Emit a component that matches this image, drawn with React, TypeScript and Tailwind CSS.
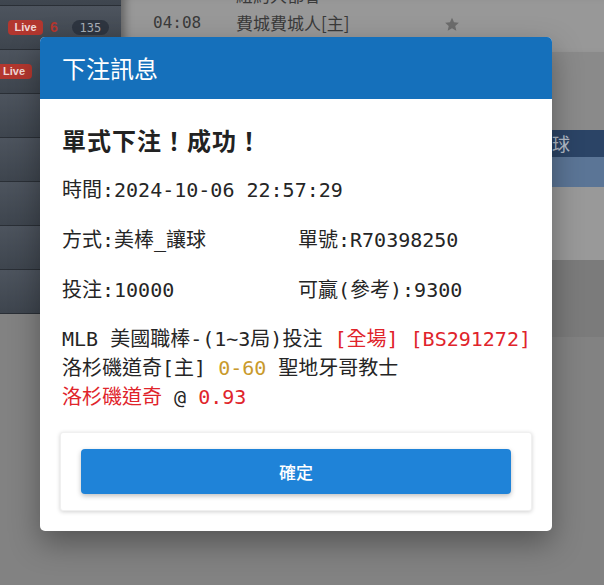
const mono = "font-['DejaVu_Sans_Mono','Noto_Sans_CJK_TC',monospace]";

function LiveBadge({ className = "" }: { className?: string }) {
  return (
    <span
      className={`inline-flex h-[15px] items-center rounded-[4px] bg-[#b3372f] px-[4px] font-['Liberation_Sans',sans-serif] text-[11px] font-bold text-[#f1d9d7] ${className}`}
    >
      Live
    </span>
  );
}

function Sidebar() {
  const rows = [0, 1, 2, 3, 4, 5, 6, 7];
  return (
    <div className="flex w-[121px] shrink-0 flex-col">
      <div className="mt-[-38px] flex flex-col">
        {rows.map((r) => (
          <div
            key={r}
            className="flex h-[44px] items-center border-b border-[#2a2f36] bg-linear-to-b from-[#4d545e] to-[#3e454e]"
          >
            {r === 1 && (
              <div className="flex items-center">
                <LiveBadge className="ml-[8px] w-[35px] justify-center" />
                <span className="ml-[7px] font-['Liberation_Sans',sans-serif] text-[14px] font-bold text-[#b3372f]">
                  6
                </span>
                <span className="ml-[14px] flex h-[15px] w-[37px] items-center justify-center rounded-full bg-[#2e3540] font-['DejaVu_Sans_Mono',monospace] text-[12px] text-[#a9afb7]">
                  135
                </span>
              </div>
            )}
            {r === 2 && <LiveBadge className="ml-[-4px] w-[36px] justify-center" />}
          </div>
        ))}
      </div>
    </div>
  );
}

function Main() {
  return (
    <div className="flex flex-1 flex-col">
      <div className="h-[52px] overflow-hidden bg-[#989898] pl-[32px] shadow-[inset_10px_0_8px_-6px_rgba(0,0,0,0.35)]">
        <div className="mt-[-19px] flex flex-col text-[#3a3a3a]">
          <div className="flex h-[28px] items-center">
            <span className={`w-[83px] text-[16px] ${mono}`}>10:07</span>
            <span className="text-[17px]">紐約大都會</span>
          </div>
          <div className="flex h-[28px] items-center">
            <span className={`w-[83px] text-[16px] ${mono}`}>04:08</span>
            <span className="w-[207px] text-[17px]">費城費城人[主]</span>
            <svg width="18" height="17" viewBox="0 0 24 24" className="mt-[3px]">
              <path
                d="M12 2.5l2.9 6.2 6.8.7-5.1 4.6 1.5 6.7L12 17.3l-6.1 3.4 1.5-6.7-5.1-4.6 6.8-.7z"
                fill="#6c6c6c"
              />
            </svg>
          </div>
        </div>
      </div>
      <div className="h-[78px] bg-[#8a8a8a]" />
      <div className="flex h-[27px] items-center bg-[#2b4466] pl-[413px] text-[18px] text-[#b4bdc9]">
        讓球
      </div>
      <div className="h-[30px] bg-[#5b7596]" />
      <div className="h-[73px] bg-[#999999]" />
      <div className="h-[77px] bg-[#7b7b7b]" />
    </div>
  );
}

function BetModal() {
  return (
    <div className="absolute left-[40px] top-[37px] w-[512px] overflow-hidden rounded-[5px] bg-white shadow-[0_12px_30px_rgba(0,0,0,0.35)]">
      <div className="flex h-[62px] items-center bg-[#1570bb] px-[22px] text-[24px] text-white">
        下注訊息
      </div>
      <div className={`px-[20px] pb-[20px] pt-[26px] text-[20px] text-[#252525] ${mono}`}>
        <div className="flex h-[30px] items-center px-[2px] font-['Noto_Sans_CJK_TC',sans-serif] text-[24px] font-bold tracking-[1px] text-[#222]">
          單式下注！成功！
        </div>
        <div className="mt-[20px] flex h-[30px] items-center px-[2px]">時間:2024-10-06 22:57:29</div>
        <div className="mt-[20px] grid h-[30px] grid-cols-[236px_1fr] items-center px-[2px]">
          <span>方式:美棒_讓球</span>
          <span>單號:R70398250</span>
        </div>
        <div className="mt-[20px] grid h-[30px] grid-cols-[236px_1fr] items-center px-[2px]">
          <span>投注:10000</span>
          <span>可贏(參考):9300</span>
        </div>
        <div className="mt-[20px] px-[2px] leading-[29px] whitespace-pre">
          <div>
            MLB 美國職棒-(1~3局)投注 <span className="text-[#e0242b]">[全場] [BS291272]</span>
          </div>
          <div>
            洛杉磯道奇[主] <span className="text-[#c99a2c]">0-60</span> 聖地牙哥教士
          </div>
          <div>
            <span className="text-[#e0242b]">洛杉磯道奇</span> @ <span className="text-[#e0242b]">0.93</span>
          </div>
        </div>
        <div className="mt-[20px] rounded-[3px] border border-[#f0f0f0] bg-white px-[20px] py-[16px] shadow-[0_1px_4px_rgba(0,0,0,0.18)]">
          <button className="flex h-[45px] w-full items-center justify-center rounded-[4px] bg-[#1f83d8] font-['Noto_Sans_CJK_TC',sans-serif] text-[17px] font-medium text-white shadow-[0_2px_5px_rgba(0,0,0,0.25)]">
            確定
          </button>
        </div>
      </div>
    </div>
  );
}

export default function App() {
  return (
    <div className="relative flex h-[585px] w-[604px] overflow-hidden bg-[#828282] font-['Noto_Sans_CJK_TC',sans-serif]">
      <Sidebar />
      <Main />
      <BetModal />
    </div>
  );
}
